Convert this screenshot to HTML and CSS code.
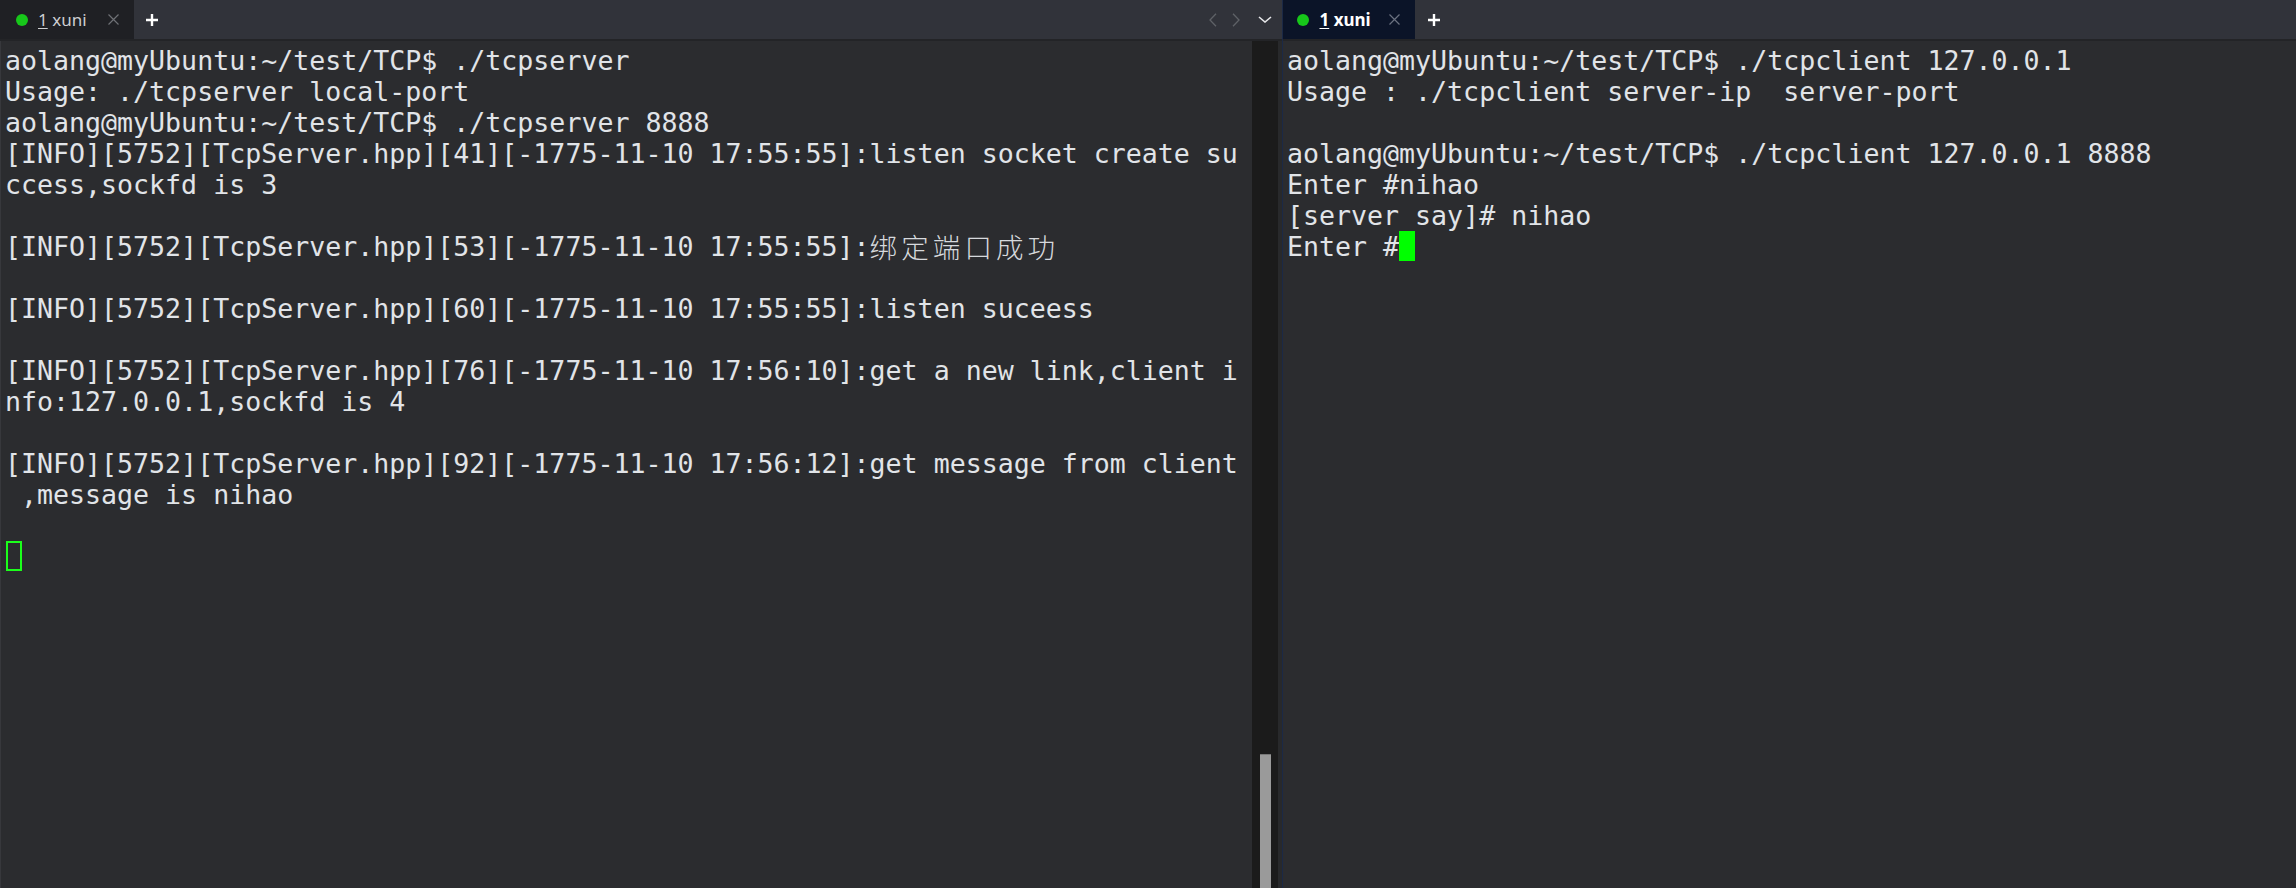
FILE: index.html
```html
<!DOCTYPE html>
<html lang="zh-CN">
<head>
<meta charset="utf-8">
<title>Terminal</title>
<link rel="stylesheet" href="styles.css">
</head>
<body>
<div class="app">
  <section class="pane pane-left">
    <header class="tabbar">
      <div class="tab">
        <span class="dot"></span>
        <span class="tab-title"><span class="num">1</span> xuni</span>
        <svg class="close" viewBox="0 0 11 11" width="11" height="11"><path d="M0.5 0.5L10.5 10.5M10.5 0.5L0.5 10.5"/></svg>
      </div>
      <svg class="plus" viewBox="0 0 12 12" width="12" height="12"><path d="M6 0V12M0 6H12"/></svg>
      <div class="spacer"></div>
      <div class="nav">
        <svg class="nav-arrow" viewBox="0 0 8 14" width="8" height="14"><path d="M7 0.7L1 7L7 13.3"/></svg>
        <svg class="nav-arrow" viewBox="0 0 8 14" width="8" height="14"><path d="M1 0.7L7 7L1 13.3"/></svg>
        <svg class="nav-down" viewBox="0 0 14 7" width="14" height="7"><path d="M1 1L7 6L13 1"/></svg>
      </div>
    </header>
    <div class="pane-body">
<pre class="term term-left">aolang@myUbuntu:~/test/TCP$ ./tcpserver
Usage: ./tcpserver local-port
aolang@myUbuntu:~/test/TCP$ ./tcpserver 8888
[INFO][5752][TcpServer.hpp][41][-1775-11-10 17:55:55]:listen socket create su
ccess,sockfd is 3

[INFO][5752][TcpServer.hpp][53][-1775-11-10 17:55:55]:<span class="wide">绑定端口成功</span>

[INFO][5752][TcpServer.hpp][60][-1775-11-10 17:55:55]:listen suceess

[INFO][5752][TcpServer.hpp][76][-1775-11-10 17:56:10]:get a new link,client i
nfo:127.0.0.1,sockfd is 4

[INFO][5752][TcpServer.hpp][92][-1775-11-10 17:56:12]:get message from client
 ,message is nihao

<span class="cursor cursor-hollow"></span></pre>
      <div class="scrollbar"><div class="thumb"></div></div>
      <div class="gutter"></div>
    </div>
  </section>
  <section class="pane pane-right">
    <header class="tabbar">
      <div class="tab tab-active">
        <span class="dot"></span>
        <span class="tab-title"><span class="num">1</span> xuni</span>
        <svg class="close" viewBox="0 0 11 11" width="11" height="11"><path d="M0.5 0.5L10.5 10.5M10.5 0.5L0.5 10.5"/></svg>
      </div>
      <svg class="plus" viewBox="0 0 12 12" width="12" height="12"><path d="M6 0V12M0 6H12"/></svg>
      <div class="spacer"></div>
    </header>
    <div class="pane-body">
<pre class="term term-right">aolang@myUbuntu:~/test/TCP$ ./tcpclient 127.0.0.1
Usage : ./tcpclient server-ip  server-port

aolang@myUbuntu:~/test/TCP$ ./tcpclient 127.0.0.1 8888
Enter #nihao
[server say]# nihao
Enter #<span class="cursor cursor-solid"></span></pre>
    </div>
  </section>
</div>
</body>
</html>
```

FILE: styles.css
```css
html, body {
  margin: 0;
  padding: 0;
  background: #2b2c2f;
}

.app {
  display: flex;
  width: 2296px;
  height: 888px;
  overflow: hidden;
}

.pane {
  display: flex;
  flex-direction: column;
  height: 888px;
}

.pane-left {
  width: 1282px;
  flex: none;
}

.pane-right {
  flex: 1;
  border-left: 1px solid #1b2946;
}

.tabbar {
  display: flex;
  align-items: center;
  height: 39px;
  flex: none;
  background: #31333a;
}

.tab {
  display: flex;
  align-items: center;
  box-sizing: border-box;
  width: 134px;
  height: 39px;
  padding: 0 15px 0 15.5px;
  background: #1f2024;
  font-family: "Noto Sans", "Open Sans", sans-serif;
  font-size: 17px;
  color: #cdced1;
}

.tab-active {
  width: 132px;
  padding-left: 14px;
  background: #0b1428;
  color: #ffffff;
  font-weight: 700;
}

.dot {
  width: 12px;
  height: 12px;
  border-radius: 50%;
  background: #17c71a;
  margin-right: 10.5px;
  flex: none;
}

.tab-title {
  white-space: nowrap;
  line-height: 1;
}

.num {
  text-decoration: underline;
  text-underline-offset: 2px;
}

.close {
  margin-left: auto;
  fill: none;
  stroke: #6e7075;
  stroke-width: 1.2;
}

.tab-active .close {
  stroke: #6b7180;
}

.plus {
  margin-left: 12px;
  fill: none;
  stroke: #ffffff;
  stroke-width: 2.4;
}

.pane-right .plus {
  margin-left: 13px;
}

.spacer {
  flex: 1;
}

.nav {
  display: flex;
  align-items: center;
  padding-right: 10px;
}

.nav-arrow {
  fill: none;
  stroke: #5f6267;
  stroke-width: 1.3;
  margin-right: 15px;
}

.nav-down {
  fill: none;
  stroke: #e6e7e9;
  stroke-width: 1.6;
  margin-left: 3px;
}

.pane-body {
  flex: 1;
  display: flex;
  min-height: 0;
  border-top: 2px solid #232427;
}

.term {
  flex: 1;
  margin: 0;
  padding: 4px 0 0 4px;
  background: #2b2c2f;
  color: #e1e4e8;
  font-family: "DejaVu Sans Mono", "Liberation Mono", monospace;
  font-size: 26.6px;
  line-height: 31px;
  white-space: pre;
  overflow: hidden;
}

.term-left {
  border-left: 1px solid #37383c;
}

.wide {
  display: inline-block;
  height: 31px;
  line-height: 31px;
  vertical-align: top;
  font-family: "Noto Sans CJK SC", "DejaVu Sans Mono", sans-serif;
  font-size: 27.5px;
  font-weight: 300;
  letter-spacing: 4.1px;
  color: #d6d9dd;
}

.cursor {
  display: inline-block;
  box-sizing: border-box;
  width: 16px;
  height: 30px;
  vertical-align: top;
}

.cursor-hollow {
  border: 2px solid #1bff1b;
  margin-left: 1px;
}

.cursor-solid {
  background: #00ff00;
}

.scrollbar {
  width: 26px;
  flex: none;
  display: flex;
  flex-direction: column;
  background: #1b1b1b;
}

.thumb {
  margin-top: auto;
  margin-left: 8px;
  width: 11px;
  height: 133px;
  background: #9a9a9a;
  border-top: 1px solid #777777;
}

.gutter {
  width: 4px;
  flex: none;
  background: #28292b;
}
```
